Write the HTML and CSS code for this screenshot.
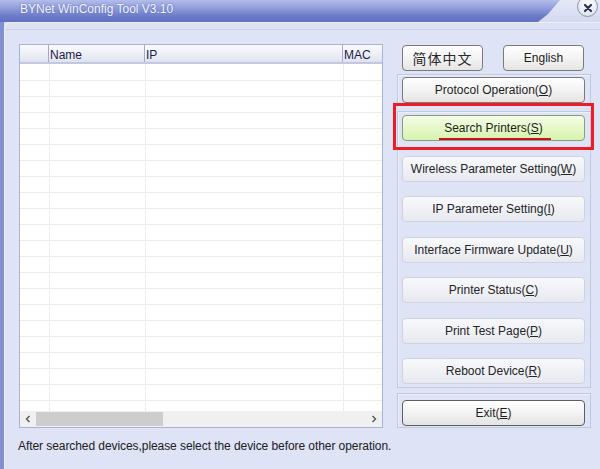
FILE: index.html
```
<!DOCTYPE html>
<html>
<head>
<meta charset="utf-8">
<link rel="stylesheet" href="styles.css">
</head>
<body>
<div class="window">
  <div class="titlebar">
    <div class="title-shape">BYNet WinConfig Tool V3.10</div>
    <div class="close">
      <svg width="10" height="10" viewBox="0 0 10 10"><path d="M2 2 L8 8 M8 2 L2 8" stroke="#2a3350" stroke-width="2.2" stroke-linecap="round"/></svg>
    </div>
  </div>
  <div class="frame">
    <div class="panel">
      <div class="client">
        <div class="main">
          <div class="grid">
            <div class="grid-head">
              <div class="hc c0"></div>
              <div class="hc c1">Name</div>
              <div class="hc c2">IP</div>
              <div class="hc c3">MAC</div>
            </div>
            <div class="grid-body">
              <table class="rows">
                <tr><td class="c0"></td><td class="c1"></td><td class="c2"></td><td class="c3"></td></tr>
                <tr><td class="c0"></td><td class="c1"></td><td class="c2"></td><td class="c3"></td></tr>
                <tr><td class="c0"></td><td class="c1"></td><td class="c2"></td><td class="c3"></td></tr>
                <tr><td class="c0"></td><td class="c1"></td><td class="c2"></td><td class="c3"></td></tr>
                <tr><td class="c0"></td><td class="c1"></td><td class="c2"></td><td class="c3"></td></tr>
                <tr><td class="c0"></td><td class="c1"></td><td class="c2"></td><td class="c3"></td></tr>
                <tr><td class="c0"></td><td class="c1"></td><td class="c2"></td><td class="c3"></td></tr>
                <tr><td class="c0"></td><td class="c1"></td><td class="c2"></td><td class="c3"></td></tr>
                <tr><td class="c0"></td><td class="c1"></td><td class="c2"></td><td class="c3"></td></tr>
                <tr><td class="c0"></td><td class="c1"></td><td class="c2"></td><td class="c3"></td></tr>
                <tr><td class="c0"></td><td class="c1"></td><td class="c2"></td><td class="c3"></td></tr>
                <tr><td class="c0"></td><td class="c1"></td><td class="c2"></td><td class="c3"></td></tr>
                <tr><td class="c0"></td><td class="c1"></td><td class="c2"></td><td class="c3"></td></tr>
                <tr><td class="c0"></td><td class="c1"></td><td class="c2"></td><td class="c3"></td></tr>
                <tr><td class="c0"></td><td class="c1"></td><td class="c2"></td><td class="c3"></td></tr>
                <tr><td class="c0"></td><td class="c1"></td><td class="c2"></td><td class="c3"></td></tr>
                <tr><td class="c0"></td><td class="c1"></td><td class="c2"></td><td class="c3"></td></tr>
                <tr><td class="c0"></td><td class="c1"></td><td class="c2"></td><td class="c3"></td></tr>
                <tr><td class="c0"></td><td class="c1"></td><td class="c2"></td><td class="c3"></td></tr>
                <tr><td class="c0"></td><td class="c1"></td><td class="c2"></td><td class="c3"></td></tr>
                <tr><td class="c0"></td><td class="c1"></td><td class="c2"></td><td class="c3"></td></tr>
                <tr><td class="c0"></td><td class="c1"></td><td class="c2"></td><td class="c3"></td></tr>
              </table>
            </div>
            <div class="hscroll">
              <div class="arrow"><svg width="6" height="8" viewBox="0 0 6 8"><path d="M4.5 1 L1.5 4 L4.5 7" fill="none" stroke="#555" stroke-width="1.4"/></svg></div>
              <div class="thumb"></div>
              <div class="track"></div>
              <div class="arrow"><svg width="6" height="8" viewBox="0 0 6 8"><path d="M1.5 1 L4.5 4 L1.5 7" fill="none" stroke="#555" stroke-width="1.4"/></svg></div>
            </div>
          </div>
          <div class="status">After searched devices,please select the device before other operation.</div>
        </div>
        <div class="side">
          <div class="lang">
            <div class="btn std cjk">简体中文</div>
            <div class="btn std">English</div>
          </div>
          <div class="group g1">
            <div class="btn std">Protocol Operation(<u>O</u>)</div>
          </div>
          <div class="group g2">
            <div class="btn green">Search Printers(<u>S</u>)<span class="mark"></span></div>
            <div class="btn flat">Wireless Parameter Setting(<u>W</u>)</div>
            <div class="btn flat">IP Parameter Setting(<u>I</u>)</div>
            <div class="btn flat">Interface Firmware Update(<u>U</u>)</div>
            <div class="btn flat">Printer Status(<u>C</u>)</div>
            <div class="btn flat">Print Test Page(<u>P</u>)</div>
            <div class="btn flat">Reboot Device(<u>R</u>)</div>
          </div>
          <div class="group g3">
            <div class="btn exit">Exit(<u>E</u>)</div>
          </div>
          <div class="highlight"></div>
        </div>
      </div>
    </div>
  </div>
</div>
</body>
</html>
```

FILE: styles.css
```
* { box-sizing: border-box; margin: 0; padding: 0; }
html, body { width: 600px; height: 469px; overflow: hidden; }
body {
  font-family: "Liberation Sans", Arial, sans-serif;
  font-size: 12px;
  color: #1e1e1e;
  background: #d9dff2;
}
.window {
  width: 600px;
  height: 469px;
  display: flex;
  flex-direction: column;
  background: #d9dff2;
}
.titlebar {
  height: 22px;
  position: relative;
  display: flex;
  background: linear-gradient(#e4e8f7, #d3d9ef);
}
.title-shape {
  width: 560px;
  height: 22px;
  background: linear-gradient(#b3bdea, #8e9ada 40%, #6a79c8 75%, #6171c2);
  clip-path: polygon(0 0, 560px 0, 548px 14px, 538px 22px, 0 22px);
  padding-left: 20px;
  color: #f3f5ff;
  line-height: 18px;
  font-size: 12px;
  text-shadow: 0 0 2px #5563b4;
}
.close {
  position: absolute;
  left: 577px;
  top: -4px;
  width: 21px;
  height: 21px;
  border-radius: 50%;
  border: 1px solid #8b93ad;
  background: radial-gradient(circle at 50% 35%, #ffffff, #e3e7f2 70%, #c9cfe0);
  display: flex;
  align-items: center;
  justify-content: center;
  padding-top: 3px;
}
.frame {
  flex: 1;
  display: flex;
  border-left: 4px solid #8090d3;
}
.panel {
  flex: 1;
  display: flex;
  flex-direction: column;
  border-top: 1px solid #eef1fb;
  border-left: 1px solid #eef1fb;
  border-top-left-radius: 7px;
  background: #dce2f4;
}
.client {
  flex: 1;
  margin-top: 6px;
  border-top: 1px solid #cad1ea;
  background: #dee3f5;
  display: flex;
  padding: 14px 0 0 14px;
}
.main {
  width: 364px;
  display: flex;
  flex-direction: column;
}
.grid {
  width: 364px;
  height: 384px;
  border: 1px solid #aab2d8;
  background: #fff;
  display: flex;
  flex-direction: column;
}
.grid-head {
  height: 19px;
  display: flex;
  background: linear-gradient(#fafafd, #eceef6 60%, #dfe2ef);
  border-bottom: 2px solid #c3c8e0;
}
.hc {
  border-right: 1px solid #a3abd2;
  padding-left: 1px;
  padding-top: 2px;
  line-height: 16px;
  color: #1c1c48;
  font-size: 12px;
}
.c0 { width: 29px; }
.c1 { width: 96px; }
.c2 { width: 198px; }
.c3 { width: 39px; border-right: none; }
.grid-body {
  flex: 1;
  overflow: hidden;
}
.rows {
  border-collapse: collapse;
  table-layout: fixed;
  width: 362px;
}
.rows td {
  height: 16px;
  border-right: 1px solid #ebebf1;
  border-bottom: 1px solid #ebebf1;
  padding: 0;
}
.rows td.c3 { border-right: none; }
.hscroll {
  height: 16px;
  display: flex;
  background: #f0f0f0;
}
.arrow {
  width: 16px;
  display: flex;
  align-items: center;
  justify-content: center;
}
.thumb {
  width: 127px;
  margin: 1px 0;
  background: #cdcdcd;
}
.track { flex: 1; }
.status {
  margin-top: 11px;
  margin-left: -1px;
  line-height: 14px;
  color: #202020;
  white-space: nowrap;
  letter-spacing: -0.07px;
}
.side {
  width: 194px;
  margin-left: 14px;
  position: relative;
  display: flex;
  flex-direction: column;
}
.lang {
  display: flex;
  gap: 20px;
  padding: 1px 0 0 5px;
}
.lang .btn { width: 81px; }
.btn {
  height: 26px;
  border-radius: 4px;
  display: flex;
  align-items: center;
  justify-content: center;
  font-size: 12px;
  color: #1e1e1e;
  white-space: nowrap;
  position: relative;
}
.btn u { text-underline-offset: 1px; }
.std {
  border: 1px solid #7a7a7a;
  background: linear-gradient(#ffffff, #f3f3f3 50%, #e5e5e5);
}
.cjk {
  font-family: "Noto Sans CJK SC", sans-serif;
  font-size: 14px;
  letter-spacing: 1px;
  color: #2a2a2a;
}
.flat {
  border: 1px solid #cfd3df;
  background: linear-gradient(#f8f9fb, #eff1f5 50%, #e7e9f0);
  color: #252525;
}
.green {
  border: 1px solid #8c9c82;
  background: linear-gradient(#f5fde8, #e6f9c8 50%, #d7f3ae);
}
.exit {
  border: 1px solid #5f5f5f;
  background: linear-gradient(#ffffff, #f3f3f3 50%, #e3e3e3);
}
.group {
  border: 1px solid #c0c7e1;
  box-shadow: inset 1px 1px 0 #eef1fa;
  padding: 2px 5px 0 4px;
  display: flex;
  flex-direction: column;
}
.g1 { margin-top: 3px; height: 32px; }
.g2 { margin-top: 5px; padding-top: 3px; gap: 14.5px; height: 277px; }
.g3 { margin-top: 5px; padding-top: 6px; height: 35px; }
.mark {
  position: absolute;
  left: 36px;
  top: 22px;
  width: 112px;
  height: 2px;
  background: #c8141a;
}
.highlight {
  position: absolute;
  left: -4px;
  top: 59px;
  width: 201px;
  height: 47px;
  border: 3px solid #ee1c24;
}
```
